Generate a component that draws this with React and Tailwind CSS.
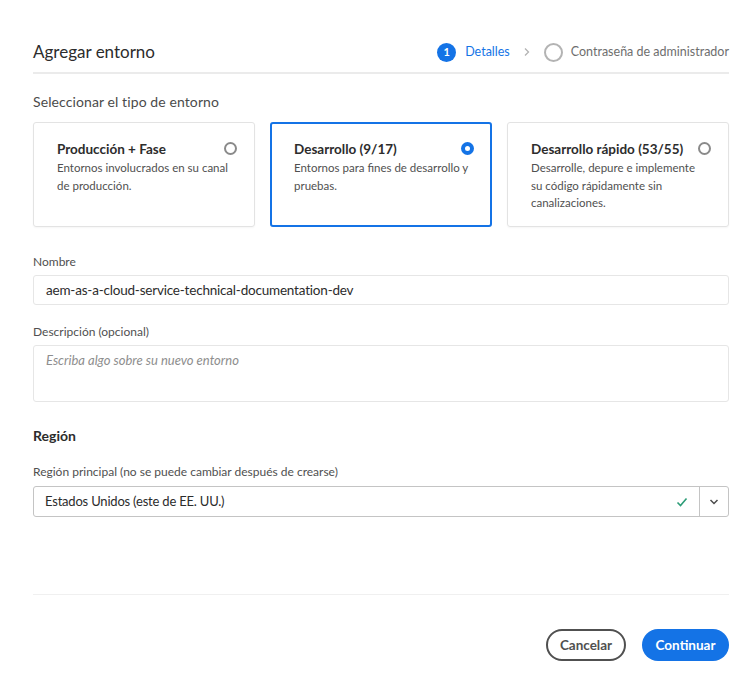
const cards = [
  {
    title: "Producción + Fase",
    desc: "Entornos involucrados en su canal de producción.",
    selected: false,
  },
  {
    title: "Desarrollo (9/17)",
    desc: "Entornos para fines de desarrollo y pruebas.",
    selected: true,
  },
  {
    title: "Desarrollo rápido (53/55)",
    desc: "Desarrolle, depure e implemente su código rápidamente sin canalizaciones.",
    selected: false,
  },
];

function Radio({ on }) {
  if (on) {
    return (
      <span className="mt-[1px] flex h-[13px] w-[13px] shrink-0 items-center justify-center rounded-full bg-[#1473e6]">
        <span className="h-[5px] w-[5px] rounded-full bg-white" />
      </span>
    );
  }
  return <span className="mt-[1px] h-[13px] w-[13px] shrink-0 rounded-full border-2 border-[#8a8a8a]" />;
}

export default function App() {
  return (
    <div className="min-h-[697px] w-[750px] bg-white pl-[33px] pr-[21px] pt-[40px] text-[#2c2c2c] [font-family:Lato,'Liberation_Sans',Arial,sans-serif]">
      {/* header */}
      <div className="flex items-center justify-between border-b-2 border-[#ebebeb] pb-[8px]">
        <h1 className="text-[17px] leading-[24px]">Agregar entorno</h1>
        <div className="flex items-center text-[12.5px]">
          <span className="flex h-[19px] w-[19px] items-center justify-center rounded-full bg-[#1473e6] text-[11px] font-bold text-white">1</span>
          <span className="ml-[9px] text-[#1473e6]">Detalles</span>
          <svg className="ml-[13px] mr-[13px]" width="8" height="10" viewBox="0 0 8 10">
            <path d="M2 1.5 L5.5 5 L2 8.5" fill="none" stroke="#b3b3b3" strokeWidth="1.3" />
          </svg>
          <span className="h-[19px] w-[19px] rounded-full border-2 border-[#b3b3b3]" />
          <span className="ml-[8px] text-[#6e6e6e]">Contraseña de administrador</span>
        </div>
      </div>

      <p className="mt-[18px] text-[14px] leading-[20px] tracking-[0.1px] text-[#4b4b4b]">Seleccionar el tipo de entorno</p>

      <div className="mt-[10px] grid grid-cols-3 gap-[15px]">
        {cards.map((c) => (
          <div
            key={c.title}
            className={
              c.selected
                ? "h-[105px] rounded-[3px] border-2 border-[#1473e6] pl-[22px] pr-[16px] pt-[17px]"
                : "h-[105px] rounded-[3px] border border-[#e3e3e3] pl-[23px] pr-[17px] pt-[18px] shadow-[0_1px_2px_rgba(0,0,0,0.04)]"
            }
          >
            <div className="flex items-start justify-between gap-2">
              <div className="whitespace-nowrap text-[13.5px] font-bold leading-[16px] text-[#2c2c2c]">{c.title}</div>
              <Radio on={c.selected} />
            </div>
            <p className="mt-[2px] w-[175px] text-[11.5px] leading-[17.5px] text-[#505050]">{c.desc}</p>
          </div>
        ))}
      </div>

      <label className="mt-[27px] block text-[12px] leading-[16px] text-[#505050]">Nombre</label>
      <div className="mt-[5px] flex h-[30px] items-center rounded-[3px] border border-[#e6e6e6] px-[12px] text-[13.5px] tracking-[-0.2px] text-[#2c2c2c]">
        aem-as-a-cloud-service-technical-documentation-dev
      </div>

      <label className="mt-[19px] block text-[12px] leading-[16px] text-[#505050]">Descripción (opcional)</label>
      <div className="mt-[5px] h-[57px] rounded-[3px] border border-[#e6e6e6] px-[12px] pt-[5px] text-[13px] italic text-[#8e8e8e]">
        Escriba algo sobre su nuevo entorno
      </div>

      <h2 className="mt-[24px] text-[14px] leading-[20px] font-bold text-[#2c2c2c]">Región</h2>

      <label className="mt-[18px] block text-[12px] leading-[16px] text-[#505050]">Región principal (no se puede cambiar después de crearse)</label>
      <div className="mt-[6px] flex h-[31px] rounded-[3px] border border-[#c4c4c4]">
        <div className="flex flex-1 items-center justify-between px-[11px] text-[13px] tracking-[-0.2px] text-[#2c2c2c]">
          <span>Estados Unidos (este de EE. UU.)</span>
          <svg width="12" height="10" viewBox="0 0 12 10">
            <path d="M1.5 5.5 L4.5 8.5 L10.5 1.5" fill="none" stroke="#2d9d78" strokeWidth="1.6" />
          </svg>
        </div>
        <div className="flex w-[29px] items-center justify-center border-l border-[#c4c4c4]">
          <svg width="10" height="8" viewBox="0 0 10 8">
            <path d="M1.5 2 L5 5.5 L8.5 2" fill="none" stroke="#4b4b4b" strokeWidth="1.5" />
          </svg>
        </div>
      </div>

      <div className="mt-[77px] border-t border-[#f0f0f0]" />

      <div className="mt-[34px] flex justify-end gap-[16px] pb-[36px]">
        <button className="h-[32px] w-[80px] rounded-full border-2 border-[#505050] text-[13.5px] font-bold text-[#505050]">Cancelar</button>
        <button className="h-[32px] w-[87px] rounded-full bg-[#1473e6] text-[13.5px] font-bold text-white">Continuar</button>
      </div>
    </div>
  );
}
